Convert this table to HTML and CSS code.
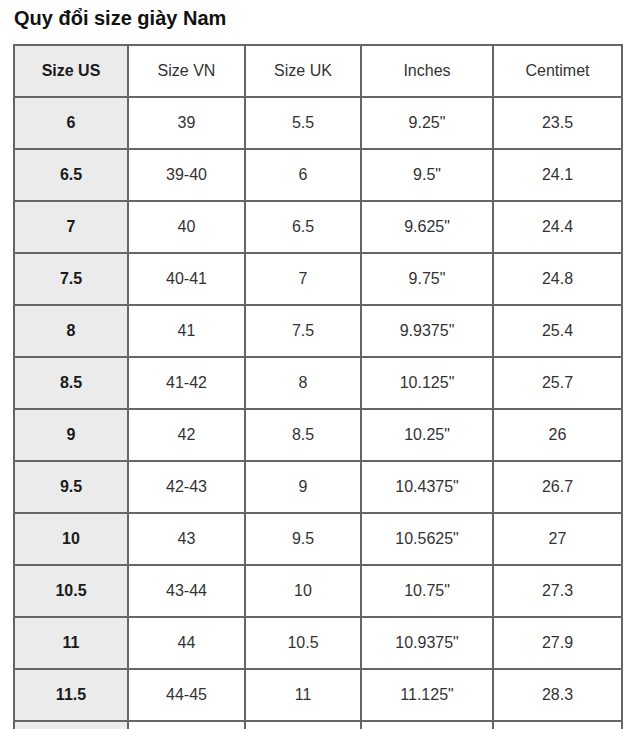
FILE: index.html
```html
<!DOCTYPE html>
<html lang="vi">
<head>
<meta charset="utf-8">
<title>Quy đổi size giày Nam</title>
<link rel="stylesheet" href="styles.css">
</head>
<body>
<h1 class="title">Quy đổi size giày Nam</h1>
<table class="size-table">
  <colgroup>
    <col class="c1"><col class="c2"><col class="c3"><col class="c4"><col class="c5">
  </colgroup>
  <tr><th class="key">Size US</th><th>Size VN</th><th>Size UK</th><th>Inches</th><th>Centimet</th></tr>
  <tr><td class="key">6</td><td>39</td><td>5.5</td><td>9.25"</td><td>23.5</td></tr>
  <tr><td class="key">6.5</td><td>39-40</td><td>6</td><td>9.5"</td><td>24.1</td></tr>
  <tr><td class="key">7</td><td>40</td><td>6.5</td><td>9.625"</td><td>24.4</td></tr>
  <tr><td class="key">7.5</td><td>40-41</td><td>7</td><td>9.75"</td><td>24.8</td></tr>
  <tr><td class="key">8</td><td>41</td><td>7.5</td><td>9.9375"</td><td>25.4</td></tr>
  <tr><td class="key">8.5</td><td>41-42</td><td>8</td><td>10.125"</td><td>25.7</td></tr>
  <tr><td class="key">9</td><td>42</td><td>8.5</td><td>10.25"</td><td>26</td></tr>
  <tr><td class="key">9.5</td><td>42-43</td><td>9</td><td>10.4375"</td><td>26.7</td></tr>
  <tr><td class="key">10</td><td>43</td><td>9.5</td><td>10.5625"</td><td>27</td></tr>
  <tr><td class="key">10.5</td><td>43-44</td><td>10</td><td>10.75"</td><td>27.3</td></tr>
  <tr><td class="key">11</td><td>44</td><td>10.5</td><td>10.9375"</td><td>27.9</td></tr>
  <tr><td class="key">11.5</td><td>44-45</td><td>11</td><td>11.125"</td><td>28.3</td></tr>
  <tr class="tail"><td class="key"></td><td></td><td></td><td></td><td></td></tr>
</table>
</body>
</html>
```
FILE: styles.css
```css
html, body {
  margin: 0;
  padding: 0;
  background: #fff;
  overflow: hidden;
}
body {
  font-family: "Liberation Sans", Arial, sans-serif;
  color: #333;
}
.title {
  margin: 0;
  padding: 6px 0 0 14px;
  height: 44px;
  box-sizing: border-box;
  font-size: 20px;
  font-weight: bold;
  color: #111;
  line-height: 24px;
}
.size-table {
  margin-left: 13px;
  border-collapse: collapse;
  table-layout: fixed;
  width: 608px;
  border: 2px solid #777;
}
.c1 { width: 114px; }
.c2 { width: 117px; }
.c3 { width: 116px; }
.c4 { width: 132px; }
.c5 { width: 129px; }
.size-table th,
.size-table td {
  border: 2px solid #666;
  height: 50px;
  padding: 0;
  text-align: center;
  vertical-align: middle;
  font-size: 16px;
  font-weight: normal;
  color: #333;
}
.size-table .tail td {
  height: 10px;
}
.size-table .key {
  background: #ebebeb;
  font-weight: bold;
  color: #1a1a1a;
}
```
